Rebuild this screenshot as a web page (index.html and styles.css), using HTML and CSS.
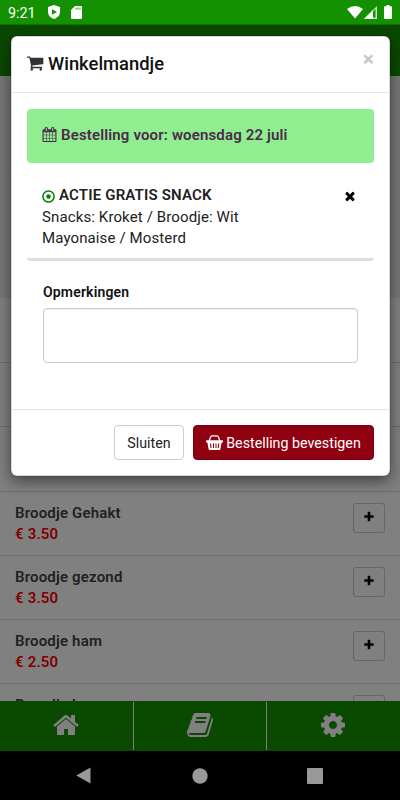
FILE: index.html
```html
<!DOCTYPE html>
<html lang="nl">
<head>
<meta charset="utf-8">
<title>Winkelmandje</title>
<link rel="stylesheet" href="styles.css">
</head>
<body>
<svg class="defs" width="0" height="0">
  <symbol id="plus" viewBox="0 0 1792 1792"><path d="M1600 736v192q0 40-28 68t-68 28h-416v416q0 40-28 68t-68 28h-192q-40 0-68-28t-28-68v-416h-416q-40 0-68-28t-28-68v-192q0-40 28-68t68-28h416v-416q0-40 28-68t68-28h192q40 0 68 28t28 68v416h416q40 0 68 28t28 68z"/></symbol>
  <symbol id="times" viewBox="0 0 1792 1792"><path d="M1490 1322q0 40-28 68l-136 136q-28 28-68 28t-68-28l-294-294-294 294q-28 28-68 28t-68-28l-136-136q-28-28-28-68t28-68l294-294-294-294q-28-28-28-68t28-68l136-136q28-28 68-28t68 28l294 294 294-294q28-28 68-28t68 28l136 136q28 28 28 68t-28 68l-294 294 294 294q28 28 28 68z"/></symbol>
</svg>
<div class="screen">
  <header class="status">
    <span class="clock">9:21</span>
    <svg class="shield" width="12" height="14" viewBox="0 0 12 14"><path fill="#fff" d="M6 0 12 2v5c0 3-2.300 5.700-6 7C2.300 12.700 0 10 0 7V2z"/><path fill="#149100" d="M4 4.200 9 7 4 9.800z"/></svg>
    <svg width="11" height="13" viewBox="0 0 11 13"><path fill="#fff" d="M4 0h6a1 1 0 0 1 1 1v11a1 1 0 0 1-1 1H1a1 1 0 0 1-1-1V4z"/><path stroke="#149100" stroke-width=".9" d="M5 1.500v2.200M7 1.500v2.200M9 1.500v2.200"/></svg>
    <div class="signals">
      <svg width="16" height="13" viewBox="0 0 16 13"><path fill="#fff" d="M0 3Q8-3 16 3L8 12.600z"/></svg>
      <svg width="13" height="13" viewBox="0 0 13 13"><path fill="#fff" fill-opacity=".75" d="M13 0v13H0z"/><path fill="#149100" d="M9 5.500 11.500 3v8.500H9z"/><path fill="#fff" d="M9 4v9H0z"/></svg>
      <svg class="battery" width="8" height="14" viewBox="0 0 8 14"><path fill="#fff" d="M2.500 0h3v1.300H7a1 1 0 0 1 1 1V13a1 1 0 0 1-1 1H1a1 1 0 0 1-1-1V2.300a1 1 0 0 1 1-1h1.500z"/></svg>
    </div>
  </header>
  <div class="appbar"></div>
  <div class="hero"></div>
  <ul class="products">
    <li></li><li></li><li></li>
    <li><div><b>Broodje Gehakt</b><strong>€ 3.50</strong></div><button class="add"><svg><use href="#plus"/></svg></button></li>
    <li><div><b>Broodje gezond</b><strong>€ 3.50</strong></div><button class="add"><svg><use href="#plus"/></svg></button></li>
    <li><div><b>Broodje ham</b><strong>€ 2.50</strong></div><button class="add"><svg><use href="#plus"/></svg></button></li>
    <li><div><b>Broodje kaas</b></div><button class="add"><svg><use href="#plus"/></svg></button></li>
  </ul>
  <nav class="tabs">
    <a><svg viewBox="0 0 1792 1792"><path d="M1472 992v480q0 26-19 45t-45 19h-384v-384h-256v384h-384q-26 0-45-19t-19-45v-480q0-1 .5-3t.5-3l575-474 575 474q1 2 1 6zm223-69l-62 74q-8 9-21 11h-3q-13 0-21-7l-692-577-692 577q-12 8-24 7-13-2-21-11l-62-74q-8-10-7-23.500t11-21.500l719-599q32-26 76-26t76 26l244 204v-195q0-14 9-23t23-9h192q14 0 23 9t9 23v408l219 182q10 8 11 21.500t-7 23.500z"/></svg></a>
    <a><svg viewBox="0 0 1792 1792"><path d="M1703 478q40 57 18 129l-275 906q-19 64-76.500 107.500t-122.500 43.500h-923q-77 0-148.500-53.500t-99.500-131.500q-24-67-2-127 0-4 3-27t4-37q1-8-3-21.500t-3-19.500q2-11 8-21t16.500-23.500 16.500-23.500q23-38 45-91.500t30-91.500q3-10 .5-30t-.5-28q3-11 17-28t17-23q21-36 42-92t25-90q1-9-2.500-32t.5-28q4-13 22-30.500t22-22.500q19-26 42.500-84.500t27.500-96.500q1-8-3-25.500t-2-26.500q2-8 9-18t18-23 17-21q8-12 16.500-30.500t15-35 16-36 19.500-32 26.500-23.500 36-11.500 47.500 5.500l-1 3q38-9 51-9h761q74 0 114 56t18 130l-274 906q-36 119-71.500 153.500t-128.500 34.500h-869q-27 0-38 15-11 16-1 43 24 70 144 70h923q29 0 56-15.500t35-41.500l300-987q7-22 5-57 38 15 59 43zm-1064 2q-4 13 2 22.500t20 9.500h608q13 0 25.500-9.500t16.500-22.500l21-64q4-13-2-22.500t-20-9.500h-608q-13 0-25.500 9.500t-16.500 22.500zm-83 256q-4 13 2 22.500t20 9.500h608q13 0 25.500-9.500t16.500-22.500l21-64q4-13-2-22.500t-20-9.500h-608q-13 0-25.500 9.500t-16.500 22.500z"/></svg></a>
    <a><svg viewBox="0 0 1792 1792"><path d="M1152 896q0-106-75-181t-181-75-181 75-75 181 75 181 181 75 181-75 75-181zm512-109v222q0 12-8 23t-20 13l-185 28q-19 54-39 91 35 50 107 138 10 12 10 25t-9 23q-27 37-99 108t-94 71q-12 0-26-9l-138-108q-44 23-91 38-16 136-29 186-7 28-36 28h-222q-14 0-24.500-8.500t-11.500-21.500l-28-184q-49-16-90-37l-141 107q-10 9-25 9-14 0-25-11-126-114-165-168-7-10-7-23 0-12 8-23 15-21 51-66.500t54-70.500q-27-50-41-99l-183-27q-13-2-21-12.500t-8-23.500v-222q0-12 8-23t19-13l186-28q14-46 39-92-40-57-107-138-10-12-10-24 0-10 9-23 26-36 98.500-107.500t94.500-71.500q13 0 26 10l138 107q44-23 91-38 16-136 29-186 7-28 36-28h222q14 0 24.500 8.500t11.500 21.500l28 184q49 16 90 37l142-107q9-9 24-9 13 0 25 10 129 119 165 170 7 8 7 22 0 12-8 23-15 21-51 66.500t-54 70.500q26 50 41 98l183 28q13 2 21 12.500t8 23.500z"/></svg></a>
  </nav>
  <footer class="system">
    <svg width="15" height="17" viewBox="0 0 15 17"><path d="M14.500.5v16L.3 8.500z"/></svg>
    <svg width="16" height="16" viewBox="0 0 16 16"><circle cx="8" cy="8" r="7.700"/></svg>
    <svg width="16" height="16" viewBox="0 0 16 16"><rect width="16" height="16" rx="1"/></svg>
  </footer>

  <section class="modal">
    <div class="modal-head">
      <svg class="cart" viewBox="0 0 1792 1792"><path d="M704 1536q0 52-38 90t-90 38-90-38-38-90 38-90 90-38 90 38 38 90zm896 0q0 52-38 90t-90 38-90-38-38-90 38-90 90-38 90 38 38 90zm128-1088v512q0 24-16.500 42.500t-40.500 21.500l-1044 122q13 60 13 70 0 16-24 64h920q26 0 45 19t19 45-19 45-45 19h-1024q-26 0-45-19t-19-45q0-11 8-31.500t16-36 21.500-40 15.500-29.500l-177-823h-204q-26 0-45-19t-19-45 19-45 45-19h256q16 0 28.500 6.500t19.500 15.500 13 24.500 8 26 5.500 29.500 4.500 26h1201q26 0 45 19t19 45z"/></svg>
      <h1>Winkelmandje</h1>
      <span class="close">×</span>
    </div>
    <div class="modal-body">
      <div class="notice">
        <svg viewBox="0 0 1792 1792"><path d="M192 1664h288v-288h-288v288zm352 0h320v-288h-320v288zm-352-352h288v-320h-288v320zm352 0h320v-320h-320v320zm-352-384h288v-288h-288v288zm736 736h320v-288h-320v288zm-384-736h320v-288h-320v288zm768 736h288v-288h-288v288zm-384-352h320v-320h-320v320zm-352-864v-288q0-13-9.500-22.500t-22.500-9.500h-64q-13 0-22.500 9.500t-9.500 22.500v288q0 13 9.500 22.500t22.500 9.500h64q13 0 22.500-9.500t9.500-22.500zm736 864h288v-320h-288v320zm-384-384h320v-288h-320v288zm384 0h288v-288h-288v288zm32-480v-288q0-13-9.500-22.500t-22.500-9.500h-64q-13 0-22.500 9.500t-9.500 22.500v288q0 13 9.500 22.500t22.500 9.500h64q13 0 22.500-9.500t9.500-22.500zm384-64v1280q0 52-38 90t-90 38h-1408q-52 0-90-38t-38-90v-1280q0-52 38-90t90-38h128v-96q0-66 47-113t113-47h64q66 0 113 47t47 113v96h384v-96q0-66 47-113t113-47h64q66 0 113 47t47 113v96h128q52 0 90 38t38 90z"/></svg>
        <span>Bestelling voor: woensdag 22 juli</span>
      </div>
      <div class="item">
        <div class="item-title">
          <svg class="dot" viewBox="0 0 13 13"><circle cx="6.500" cy="6.500" r="5.600" fill="none" stroke="#008000" stroke-width="1.500"/><circle cx="6.500" cy="6.500" r="2.200" fill="#008000"/></svg>
          <b>ACTIE GRATIS SNACK</b>
          <svg class="remove"><use href="#times"/></svg>
        </div>
        <p>Snacks: Kroket / Broodje: Wit</p>
        <p>Mayonaise / Mosterd</p>
      </div>
      <div class="remarks">
        <label for="remarks">Opmerkingen</label>
        <textarea id="remarks"></textarea>
      </div>
    </div>
    <div class="modal-foot">
      <button class="btn">Sluiten</button>
      <button class="btn primary">
        <svg width="17" height="15" viewBox="0 0 17 15"><path d="M3.200 6 4.600 1.900Q5 .8 6.200.8h4.600q1.200 0 1.600 1.100L13.800 6" fill="none" stroke="currentColor" stroke-width="1.300"/><path fill="currentColor" fill-rule="evenodd" d="M1 5.300h15a1 1 0 0 1 0 2.200h-.4l-1.100 6.300q-.2 1.200-1.300 1.200H3.800q-1.100 0-1.300-1.200L1.400 7.500H1a1 1 0 0 1 0-2.200zM4 8.500l.4 4.500h1.100L5.100 8.500zm3 0V13h1V8.500zm2.500 0V13h1V8.500zm2.600 0L11.700 13h1.100l.4-4.500z"/></svg>
        Bestelling bevestigen
      </button>
    </div>
  </section>
</div>
</body>
</html>
```
FILE: styles.css
```css
* { box-sizing: border-box; }
body { margin: 0; font-family: Roboto, "Liberation Sans", sans-serif; font-size: 15px; color: #212121; }
.defs { position: absolute; }
.screen { position: relative; width: 400px; height: 800px; overflow: hidden; display: flex; flex-direction: column; background: #808080; }
h1, p, ul { margin: 0; padding: 0; }
svg { display: block; flex: none; }
button { font: inherit; }

.status { height: 25px; flex: none; display: flex; align-items: center; padding: 0 8px; background: #149100; color: #fff; border-bottom: 1px solid #107000; }
.clock { font-size: 14.300px; width: 40px; padding-top: 1px; }
.shield { margin-right: 11px; }
.signals { margin-left: auto; display: flex; align-items: center; gap: 1px; }
.battery { margin-left: 6px; }
.appbar { height: 51px; flex: none; background: #0a4900; }
.hero { height: 222px; flex: none; background: #777; }

.products { flex: 1; min-height: 0; overflow: hidden; list-style: none; padding-top: 1px; }
.products li { height: 64.200px; display: flex; justify-content: space-between; align-items: flex-start; padding: 11px 15px 0; border-bottom: 1px solid #6d6d6d; }
.products b, .products strong { display: block; font-size: 15px; line-height: 21.400px; font-weight: 700; letter-spacing: .17px; }
.products b { color: #212121; font-weight: 600; }
.products strong { color: #800000; font-weight: 600; }
.add { width: 32px; height: 30px; padding: 0; border: 1px solid #666; border-radius: 3px; background: transparent; display: flex; align-items: center; justify-content: center; }
.add svg { width: 12px; height: 12px; margin-top: -1px; fill: #000; }

.tabs { height: 50px; flex: none; display: grid; grid-template-columns: 134px 133px 133px; background: #0a4900; padding: 1px 0; }
.tabs a { display: flex; align-items: center; justify-content: center; border-right: 1px solid #808080; }
.tabs a:last-child { border-right: 0; }
.tabs svg { width: 28px; height: 28px; margin-top: -2px; margin-right: 1px; fill: #808080; }
.system { height: 49px; flex: none; background: #000; display: flex; justify-content: space-between; align-items: center; padding: 0 77px 0 76px; }
.system svg { fill: #999; }
.system svg:nth-child(2) { margin-left: 1px; }

.modal { position: absolute; left: 11px; top: 36px; width: 379px; height: 440px; padding: 0 1px; display: flex; flex-direction: column; background: #fff; border-radius: 6px; box-shadow: inset 0 0 0 .5px rgba(0,0,0,.3), 0 0 1px rgba(0,0,0,.8), 0 5px 15px rgba(0,0,0,.5); }
.modal-head { height: 57px; flex: none; display: flex; align-items: center; padding: 0 15px 2px; border-bottom: 1px solid #e5e5e5; }
.cart { width: 18px; height: 18px; fill: #333; margin-left: -1px; margin-right: 4px; }
h1 { font-size: 18.400px; font-weight: 500; color: #111; }
.close { margin-left: auto; margin-top: -7px; font-size: 21px; line-height: 21px; font-weight: 700; color: #c8c8c8; }
.modal-body { flex: 1; padding: 15.500px 15px 15px; }
.notice { height: 54px; display: flex; align-items: center; gap: 4px; padding: 0 15px 2px; border-radius: 4px; background: #90ee90; color: #4b2a4b; font-weight: 600; letter-spacing: .15px; }
.notice svg { width: 15px; height: 15px; fill: currentColor; }
.item { height: 98.500px; padding: 22.500px 15px 0; border-bottom: 3px solid #ddd; border-radius: 4px; line-height: 21.400px; color: #212121; letter-spacing: .12px; }
.item-title { display: flex; align-items: center; gap: 4px; height: 22px; }
.item b { font-weight: 600; letter-spacing: .17px; }
.dot { width: 13px; height: 13px; }
.remove { width: 14px; height: 14px; margin-left: auto; margin-right: 2px; margin-top: -1px; }
.remarks { padding: 21px 16px 0; }
.remarks label { display: block; font-size: 14px; line-height: 20px; font-weight: 600; color: #111; letter-spacing: .17px; }
textarea { display: block; width: 315px; height: 55px; margin-top: 5.500px; padding: 6px 12px; border: 1px solid #ccc; border-radius: 4px; resize: none; background: #fff; box-shadow: inset 0 1px 1px rgba(0,0,0,.08); }
.modal-foot { height: 67px; flex: none; display: flex; justify-content: flex-end; align-items: center; gap: 9px; padding: 0 15px 1px; border-top: 1px solid #e5e5e5; }
.btn { width: 70px; height: 35px; padding: 0; border: 1px solid #ccc; border-radius: 4px; background: #fff; color: #222; font-size: 14.250px; white-space: nowrap; }
.primary { width: 181px; display: flex; align-items: center; justify-content: center; gap: 3px; background: #8f0010; border-color: #7f000c; color: #fff; }
```
